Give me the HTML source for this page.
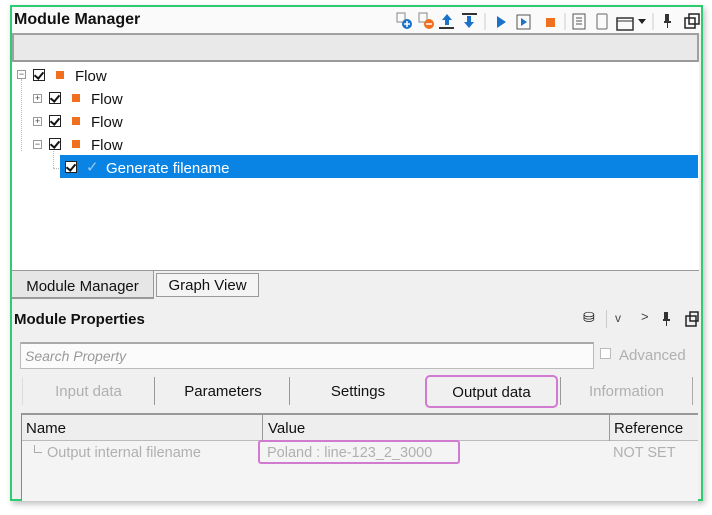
<!DOCTYPE html>
<html><head><meta charset="utf-8"><style>
*{box-sizing:border-box;margin:0;padding:0}
body{width:712px;height:515px;background:#fff;font-family:"Liberation Sans",sans-serif;position:relative;overflow:hidden}
.a{position:absolute}
.win{left:10px;top:5px;width:693px;height:496px;border:2px solid #2ecc71;background:#f0f0f0;box-shadow:2px 3px 6px rgba(0,0,0,.25)}
.t{font-size:15px;color:#111;white-space:nowrap}
.cb{width:12px;height:12px;border:1.5px solid #222;background:#fff}
.cb:after{content:"";position:absolute;left:2px;top:0px;width:4px;height:7px;border:solid #111;border-width:0 2px 2px 0;transform:rotate(40deg)}
.sq{width:8px;height:8px;background:#f07020}
.ex{width:9px;height:9px;border:1px solid #999;background:#fff;font-size:9px;line-height:7px;text-align:center;color:#444}
.tab{height:28px;font-size:15px;text-align:center;line-height:30px;color:#111}
.gray{color:#b0b0b0}
</style></head><body>
<div class="a win"></div>
<div class="a" style="left:12px;top:7px;width:689px;height:26px;background:#fafafa"></div>
<div class="a t" style="left:14px;top:11px;font-weight:bold;font-size:16px">Module Manager</div>
<svg class="a" style="left:395px;top:10px" width="310" height="22" viewBox="0 0 310 22">
<rect x="2" y="3" width="8" height="9" fill="none" stroke="#888"/>
<circle cx="12" cy="14" r="5" fill="#1a73c8"/><path d="M9 14h6M12 11v6" stroke="#fff" stroke-width="1.5"/>
<rect x="24" y="3" width="8" height="9" fill="none" stroke="#888"/>
<circle cx="34" cy="14" r="5" fill="#f07020"/><path d="M31 14h6" stroke="#fff" stroke-width="1.5"/>
<path d="M52 4l-5 6h3v5h4v-5h3z" fill="#1a73c8"/><rect x="44" y="17" width="15" height="2" fill="#333"/>
<rect x="67" y="3" width="15" height="2" fill="#333"/><path d="M74 18l-5-6h3v-6h4v6h3z" fill="#1a73c8"/>
<path d="M90 3v17" stroke="#ccc"/>
<path d="M102 6l9 6-9 6z" fill="#1a73c8"/>
<rect x="122" y="5" width="13" height="14" fill="none" stroke="#555"/><path d="M126 8l6 4-6 4z" fill="#1a73c8"/>
<rect x="151" y="8" width="9" height="9" fill="#f07020"/>
<path d="M170 3v17" stroke="#ccc"/>
<rect x="178" y="4" width="12" height="15" fill="none" stroke="#555"/><path d="M181 8h6M181 11h6M181 14h6" stroke="#555"/>
<rect x="202" y="4" width="10" height="15" rx="1" fill="none" stroke="#666"/>
<rect x="222" y="8" width="16" height="12" fill="none" stroke="#333" stroke-width="1.5"/><path d="M222 11h16" stroke="#333"/>
<path d="M243 9h8l-4 5z" fill="#222"/>
<path d="M258 3v17" stroke="#ccc"/>
<path d="M270 4h4v7h2v2h-3v5h-1v-5h-3v-2h1z" fill="#333"/>
<rect x="290" y="8" width="10" height="10" fill="none" stroke="#222" stroke-width="1.5"/><rect x="294" y="4" width="10" height="10" fill="none" stroke="#222" stroke-width="1.5"/>
</svg>
<div class="a" style="left:12px;top:33px;width:687px;height:29px;background:#e9e9e9;border:2px solid #a0a0a0;border-bottom-color:#999"></div>
<div class="a" style="left:12px;top:62px;width:687px;height:208px;background:#fff"></div>
<div class="a" style="left:21px;top:79px;height:72px;border-left:1px dotted #bbb"></div>
<div class="a" style="left:53px;top:149px;height:19px;border-left:1px dotted #bbb"></div>
<div class="a" style="left:53px;top:168px;width:8px;border-top:1px dotted #bbb"></div>
<div class="a ex" style="left:17px;top:70px">−</div>
<div class="a cb" style="left:33px;top:69px"></div><div class="a sq" style="left:56px;top:71px"></div>
<div class="a t" style="left:75px;top:68px">Flow</div>
<div class="a ex" style="left:33px;top:94px">+</div>
<div class="a cb" style="left:49px;top:92px"></div><div class="a sq" style="left:72px;top:94px"></div>
<div class="a t" style="left:91px;top:91px">Flow</div>
<div class="a ex" style="left:33px;top:117px">+</div>
<div class="a cb" style="left:49px;top:115px"></div><div class="a sq" style="left:72px;top:117px"></div>
<div class="a t" style="left:91px;top:114px">Flow</div>
<div class="a ex" style="left:33px;top:140px">−</div>
<div class="a cb" style="left:49px;top:138px"></div><div class="a sq" style="left:72px;top:140px"></div>
<div class="a t" style="left:91px;top:137px">Flow</div>
<div class="a" style="left:60px;top:155px;width:638px;height:23px;background:#0a84e4"></div>
<div class="a cb" style="left:65px;top:161px"></div>
<div class="a t" style="left:86px;top:158px;color:#9cc8f0">✓</div>
<div class="a t" style="left:106px;top:160px;color:#fff">Generate filename</div>
<div class="a" style="left:12px;top:270px;width:687px;border-top:1px solid #999"></div>
<div class="a tab" style="left:12px;top:271px;width:142px;background:#e6e6e6;border-right:1px solid #999;border-bottom:2px solid #999;line-height:32px">Module Manager</div>
<div class="a tab" style="left:156px;top:273px;width:103px;height:24px;line-height:23px;background:#f4f4f4;border:1px solid #999">Graph View</div>
<div class="a t" style="left:14px;top:311px;font-weight:bold;font-size:15px">Module Properties</div>
<div class="a t" style="left:583px;top:309px;font-size:14px">⛁</div>
<div class="a" style="left:606px;top:310px;height:18px;border-left:1px solid #ccc"></div>
<div class="a t" style="left:615px;top:311px;font-size:12px;color:#444">v</div>
<div class="a t" style="left:641px;top:309px;font-size:13px;color:#444">&gt;</div>
<svg class="a" style="left:660px;top:310px" width="40" height="20"><path d="M4 2h4v7h2v2h-3v5h-1v-5h-3v-2h1z" fill="#333"/><rect x="26" y="6" width="10" height="10" fill="none" stroke="#222" stroke-width="1.5"/><rect x="30" y="2" width="8" height="9" fill="none" stroke="#222" stroke-width="1.5"/></svg>
<div class="a" style="left:20px;top:342px;width:574px;height:27px;background:#fbfbfb;border:1px solid #bbb;border-top:2px solid #aaa"></div>
<div class="a t" style="left:25px;top:348px;font-style:italic;color:#999;font-size:14px">Search Property</div>
<div class="a" style="left:600px;top:348px;width:11px;height:11px;border:1px solid #bbb;background:#fff"></div>
<div class="a t gray" style="left:619px;top:347px">Advanced</div>
<div class="a tab gray" style="left:22px;top:377px;width:133px;border-right:1px solid #999;border-left:1px solid #ddd">Input data</div>
<div class="a tab" style="left:157px;top:377px;width:133px;border-right:1px solid #999">Parameters</div>
<div class="a tab" style="left:292px;top:377px;width:132px">Settings</div>
<div class="a tab" style="left:425px;top:375px;width:133px;height:33px;line-height:31px;border:2px solid #d07ad0;border-radius:5px">Output data</div>
<div class="a tab gray" style="left:560px;top:377px;width:133px;border-right:1px solid #aaa;border-left:1px solid #999">Information</div>
<div class="a" style="left:21px;top:413px;width:677px;height:88px;background:#f4f4f4;border-left:1px solid #888;border-top:2px solid #999"></div>
<div class="a" style="left:22px;top:415px;width:676px;height:26px;background:#eee;border-bottom:1px solid #bbb"></div>
<div class="a" style="left:262px;top:415px;height:26px;border-left:1px solid #999"></div>
<div class="a" style="left:609px;top:415px;height:26px;border-left:1px solid #999"></div>
<div class="a t" style="left:26px;top:420px">Name</div>
<div class="a t" style="left:268px;top:420px">Value</div>
<div class="a t" style="left:614px;top:420px">Reference</div>
<div class="a" style="left:34px;top:445px;width:8px;height:8px;border-left:1px solid #aaa;border-bottom:1px solid #aaa"></div>
<div class="a t gray" style="left:47px;top:445px;font-size:14.5px">Output internal filename</div>
<div class="a" style="left:258px;top:440px;width:202px;height:24px;border:2px solid #d07ad0;border-radius:3px"></div>
<div class="a t gray" style="left:267px;top:445px;font-size:14.5px">Poland : line-123_2_3000</div>
<div class="a t gray" style="left:613px;top:445px;font-size:14.5px">NOT SET</div>
</body></html>
